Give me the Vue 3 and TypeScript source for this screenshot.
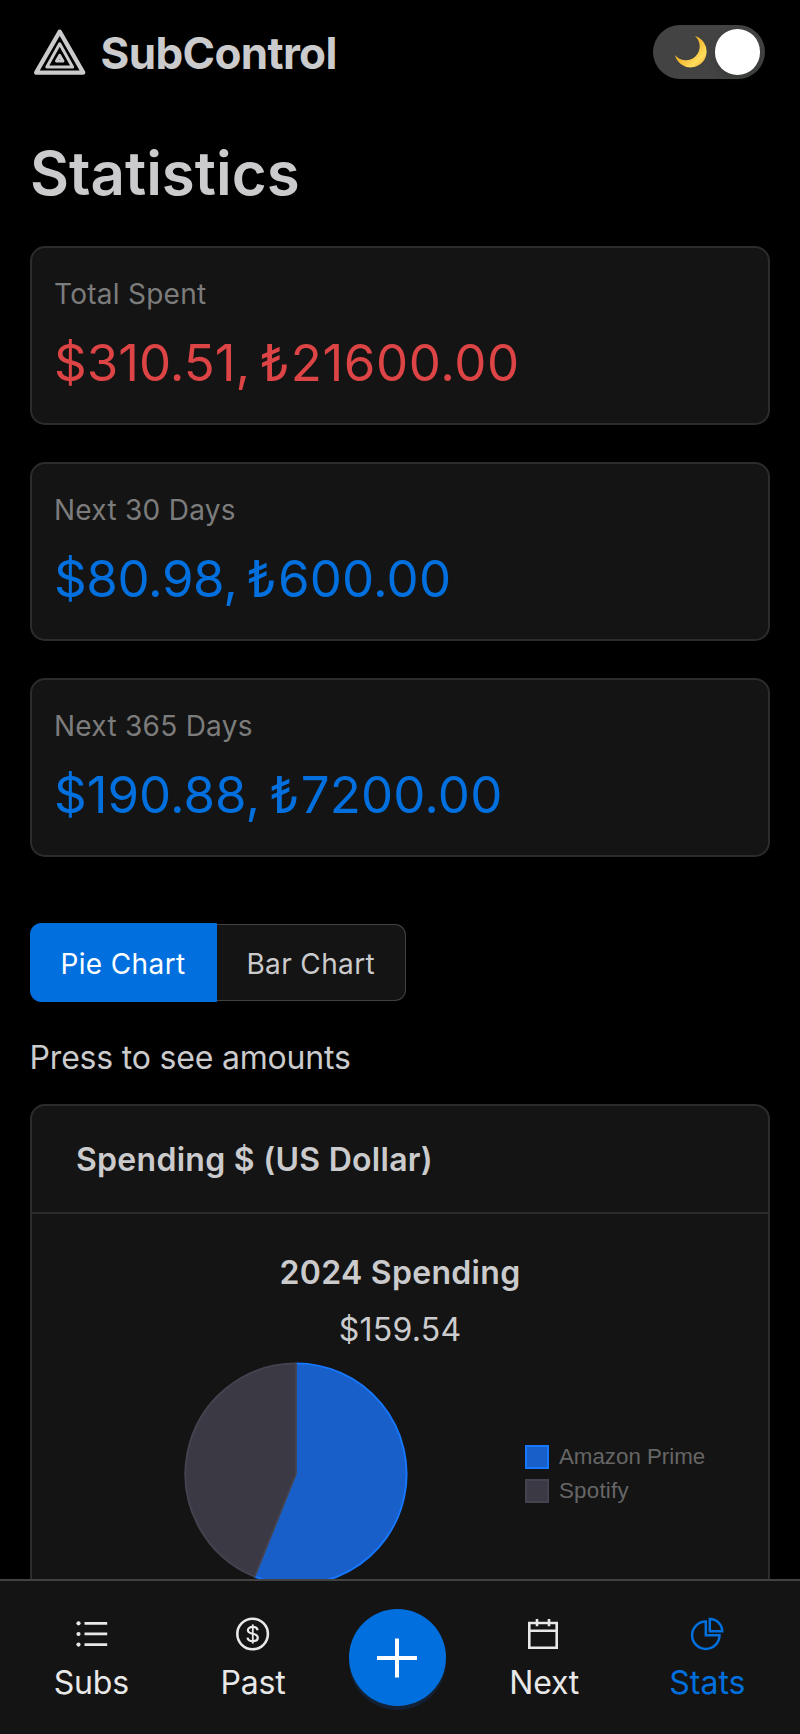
<script setup lang="ts">
import { computed, ref } from 'vue'

interface Stat { label: string; usd: string; lira: string; tone: 'red' | 'blue'; id: string }
interface Service { name: string; share: number; id: string }

const stats: Stat[] = [
  { id: 'total', label: 'Total Spent', usd: '$310.51,', lira: '21600.00', tone: 'red' },
  { id: 'month', label: 'Next 30 Days', usd: '$80.98,', lira: '600.00', tone: 'blue' },
  { id: 'year', label: 'Next 365 Days', usd: '$190.88,', lira: '7200.00', tone: 'blue' },
]
const services: Service[] = [
  { id: 'amazon', name: 'Amazon Prime', share: 0.561 },
  { id: 'spotify', name: 'Spotify', share: 0.439 },
]
const chart = ref<'pie' | 'bar'>('pie')

const R = 110.6
const slices = computed(() => {
  let start = 0
  const at = (t: number) => {
    const a = t * 2 * Math.PI - Math.PI / 2
    return `${(112 + R * Math.cos(a)).toFixed(2)} ${(112 + R * Math.sin(a)).toFixed(2)}`
  }
  return services.map((s) => {
    const end = start + s.share
    const d = `M112 112L${at(start)}A${R} ${R} 0 ${s.share > 0.5 ? 1 : 0} 1 ${at(end)}Z`
    start = end
    return { id: s.id, d }
  })
})
</script>

<template>
  <div class="page">
    <header class="header">
      <div class="brand">
        <svg class="logo" width="54" height="48" viewBox="33 28 54 48" fill="none" stroke="#cbcbcd" stroke-linejoin="round">
          <path stroke-width="4.2" d="M59.7 31.6 36.1 72.6H83.3Z" />
          <path stroke-width="3" d="M59.7 43.8 46.8 67H72.6Z" />
          <path stroke-width="3" d="M59.7 55.4 56.5 60.9H62.9Z" />
        </svg>
        <span class="name">SubControl</span>
      </div>
      <button class="toggle" aria-label="Dark mode">
        <svg class="moon" width="34" height="34" viewBox="673 35 34 34">
          <defs>
            <linearGradient id="moon" x1="0" y1="0" x2="1" y2="1">
              <stop offset="0.45" stop-color="#f3b92f" />
              <stop offset="0.75" stop-color="#ffdc5c" />
              <stop offset="0.95" stop-color="#f3b22b" />
            </linearGradient>
          </defs>
          <path fill="url(#moon)" d="M695 36A16 16 0 1 1 675 55A13.85 13.85 0 1 0 695 36Z" />
        </svg>
        <span class="knob"></span>
      </button>
    </header>

    <main class="main">
      <h1>Statistics</h1>

      <section class="stats">
        <article v-for="s in stats" :key="s.id" class="card stat" :class="s.id">
          <div class="label">{{ s.label }}</div>
          <div class="amount" :class="s.tone"><span class="usd">{{ s.usd }}</span> <span class="sign">₺</span><span class="lira">{{ s.lira }}</span></div>
        </article>
      </section>

      <div class="switch">
        <button class="seg" :class="{ on: chart === 'pie' }" @click="chart = 'pie'">Pie Chart</button>
        <button class="seg" :class="{ on: chart === 'bar' }" @click="chart = 'bar'">Bar Chart</button>
      </div>

      <p class="hint">Press to see amounts</p>

      <section class="card chart">
        <div class="chart-head">Spending $ (US Dollar)</div>
        <div class="chart-body">
          <h3>2024 Spending</h3>
          <div class="sum">$159.54</div>
          <div class="plot">
            <svg class="pie" width="224" height="224" viewBox="0 0 224 224">
              <path v-for="p in slices" :key="p.id" :d="p.d" :class="p.id" stroke-width="1.9" stroke-linejoin="bevel" />
            </svg>
            <ul class="legend">
              <li v-for="s in services" :key="s.id"><i :class="s.id"></i>{{ s.name }}</li>
            </ul>
          </div>
        </div>
      </section>
    </main>

    <nav class="nav">
      <a class="tab">
        <svg width="34" height="34" viewBox="0 0 34 34" fill="currentColor">
          <circle cx="4.5" cy="6.3" r="2.1" /><circle cx="4.5" cy="17" r="2.1" /><circle cx="4.5" cy="27.6" r="2.1" />
          <path d="M10.5 5h22.7v2.7H10.5zM10.5 15.6h22.7v2.7H10.5zM10.5 26.2h22.7v2.7H10.5z" />
        </svg>
        <span>Subs</span>
      </a>
      <a class="tab">
        <svg width="34" height="34" viewBox="0 0 34 34" fill="none" stroke="currentColor">
          <circle cx="16.6" cy="17" r="15.3" stroke-width="2.6" />
          <path stroke-width="2.2" d="M21.6 13.2C21.2 11 19.4 9.9 16.8 9.9 13.8 9.9 11.9 11.2 11.9 13.3 11.9 15.6 14 16.2 16.7 16.8 19.6 17.4 21.8 18.3 21.8 20.7 21.8 22.9 19.8 24.1 16.8 24.1 13.7 24.1 11.8 22.9 11.5 20.6" />
          <path stroke-width="1.8" d="M16.8 7.4V26.6" />
        </svg>
        <span>Past</span>
      </a>
      <button class="add" aria-label="Add">
        <svg width="40" height="40" viewBox="0 0 40 40" fill="none" stroke="#fff" stroke-width="4"><path d="M20 0.4V39.6M0 20H40" /></svg>
      </button>
      <a class="tab">
        <svg width="34" height="34" viewBox="0 0 34 34" fill="none" stroke="currentColor" stroke-width="2.6">
          <path d="M2.3 6H29.7V30.7H2.3ZM2.3 13.7H29.7M10 2V9.3M22 2V9.3" />
        </svg>
        <span>Next</span>
      </a>
      <a class="tab active">
        <svg width="34" height="34" viewBox="0 0 34 34" fill="none" stroke="currentColor" stroke-width="2.5">
          <path d="M15.8 4.6A13.7 13.7 0 1 0 29.5 18.3H15.8Z" />
          <path d="M19.8 1.9A12.4 12.4 0 0 1 32.2 14.3H19.8Z" />
        </svg>
        <span>Stats</span>
      </a>
    </nav>
  </div>
</template>

<style>
body { background: #000; }
</style>

<style scoped>
.page {
  position: relative;
  height: 1734px;
  overflow: hidden;
  background: #000;
  color: #cbcbcd;
  font-family: Inter, "Liberation Sans", sans-serif;
  font-size: 32px;
  line-height: 40px;
}
.page * { box-sizing: border-box; }
button { font-family: inherit; border: 0; padding: 0; margin: 0; }

.header {
  height: 104px;
  padding: 0 35.3px 0 33px;
  display: flex;
  align-items: center;
  justify-content: space-between;
}
.brand { display: flex; align-items: center; gap: 13.5px; }
.name { margin-top: 2px; font-size: 44px; line-height: 52px; font-weight: 700; letter-spacing: -0.65px; }
.toggle {
  width: 111.7px;
  height: 54px;
  border-radius: 27px;
  background: #434343;
  display: flex;
  align-items: center;
  justify-content: space-between;
  padding: 0 4.4px 0 20.3px;
}
.knob { width: 45.2px; height: 45.2px; border-radius: 50%; background: #fff; box-shadow: 0 4px 8px rgba(0, 35, 11, 0.2); }

.main { padding: 33px 30px 0; }
h1 { margin: 0; font-size: 60px; line-height: 72px; font-weight: 600; }
.stats { margin-top: 37px; display: flex; flex-direction: column; gap: 37px; }
.card { background: #141414; border: 2px solid #2c2c2c; border-radius: 15px; }
.stat { height: 179px; padding: 29px 21.5px 0 22px; }
.label { font-size: 28px; line-height: 34px; color: #7c7c7c; letter-spacing: 0.27px; }
.amount { margin: 21px 0 0; font-size: 51px; line-height: 62px; white-space: nowrap; word-spacing: -5.2px; }
.red { color: #dc4446; }
.blue { color: #0170de; }
.sign { margin-right: 1px; }
.month .usd { letter-spacing: -0.4px; }
.lira { letter-spacing: 0.15px; }
.total .lira { letter-spacing: 0.6px; }

.switch { display: flex; align-items: center; margin: 66px 0 0 -0.5px; height: 79px; width: 376.5px; }
.seg {
  height: 77px;
  width: 189.5px;
  background: #141414;
  border: 1.5px solid #424242;
  color: #cbcbcd;
  padding-top: 2px;
  font-size: 28px;
  letter-spacing: 0.37px;
}
.seg:first-child { width: 187px; border-radius: 11px 0 0 11px; }
.seg:last-child { border-radius: 0 11px 11px 0; border-left: 0; }
.seg.on { height: 79px; background: #0170de; border-color: #0170de; color: #fff; }

.hint { margin: 36px 0 0 -0.4px; letter-spacing: -0.2px; }
.chart { margin-top: 26px; height: 560px; }
.chart-head {
  height: 108px;
  padding: 34px 44px 0;
  border-bottom: 2px solid #2c2c2c;
  font-weight: 600;
  letter-spacing: 0.28px;
}
.chart-body { padding-top: 39px; }
h3 { margin: 0; font-size: 32px; font-weight: 600; text-align: center; letter-spacing: 0.3px; }
.sum { margin-top: 17px; text-align: center; letter-spacing: 0.25px; }
.plot { margin-top: 12px; padding-left: 151.5px; display: flex; align-items: center; }
path.amazon, i.amazon { fill: #195fc9; background: #195fc9; stroke: #1677ff; border-color: #1677ff; }
path.spotify, i.spotify { fill: #3a3944; background: #3a3944; stroke: #444450; border-color: #444450; }
.legend {
  list-style: none;
  margin: 0 0 0 117.5px;
  padding: 0;
  display: grid;
  row-gap: 9.5px;
  color: #666;
  font: 22.3px/24px "Liberation Sans", Arial, sans-serif;
}
.legend li { display: flex; gap: 10px; white-space: nowrap; }
.legend li:last-child { letter-spacing: 0.25px; }
.legend i { width: 24px; height: 24px; border-width: 2px; border-style: solid; }

.nav {
  position: absolute;
  left: 0;
  right: 0;
  bottom: 0;
  height: 155px;
  display: grid;
  grid-template-columns: 182.6px 141px 147.6px 146px 180.4px;
  justify-items: center;
  align-items: start;
  background: #141414;
  border-top: 2px solid #424242;
  color: #e8e8e8;
}
.tab { margin-top: 36px; display: flex; flex-direction: column; align-items: center; gap: 11.9px; letter-spacing: -0.2px; }
.tab.active { color: #0170de; letter-spacing: 0; }
.add {
  margin-top: 27.5px;
  width: 97px;
  height: 97px;
  border-radius: 50%;
  background: #0170de;
  box-shadow: 0 4px 0 rgba(22, 65, 130, 0.3);
  display: flex;
  align-items: center;
  justify-content: center;
}
.add svg { margin-top: 1px; }
</style>
